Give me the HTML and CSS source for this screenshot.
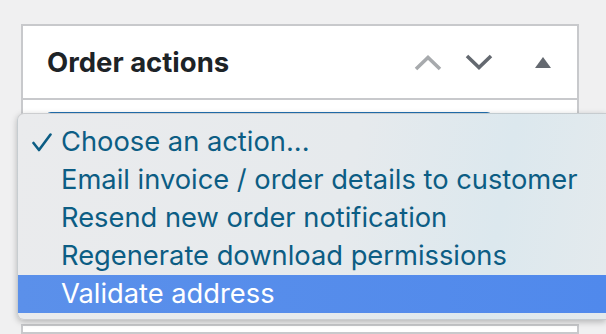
FILE: index.html
```html
<!DOCTYPE html>
<html>
<head>
<meta charset="utf-8">
<link rel="stylesheet" href="styles.css">
</head>
<body>
<div class="page">
  <div class="card">
    <div class="card-header">
      <h2 class="title">Order actions</h2>
      <div class="controls">
        <span class="ctl ctl-up"><svg width="28" height="17" viewBox="0 0 28 17"><polyline points="2,15 14,3.5 26,15" fill="none" stroke="#a7aaad" stroke-width="3.6"/></svg></span>
        <span class="ctl ctl-down"><svg width="28" height="17" viewBox="0 0 28 17"><polyline points="2,2 14,13.5 26,2" fill="none" stroke="#646970" stroke-width="3.6"/></svg></span>
        <span class="ctl ctl-toggle"><svg width="16" height="11" viewBox="0 0 16 11"><polygon points="8,0 16,11 0,11" fill="#646970"/></svg></span>
      </div>
    </div>
    <div class="card-body">
      <div class="select"></div>
    </div>
  </div>
  <div class="card card-next"></div>
</div>
<ul class="menu">
  <li class="item checked"><svg class="check" width="20" height="19" viewBox="0 0 20 19"><polyline points="1.5,10 7,17 18.5,1.5" fill="none" stroke="#0c5d84" stroke-width="2.6" stroke-linecap="round" stroke-linejoin="round"/></svg>Choose an action...</li>
  <li class="item">Email invoice / order details to customer</li>
  <li class="item">Resend new order notification</li>
  <li class="item">Regenerate download permissions</li>
  <li class="item active">Validate address</li>
</ul>
</body>
</html>
```
FILE: styles.css
```css
html, body {
  margin: 0;
  padding: 0;
  background: #f0f0f1;
  overflow: hidden;
}
.page {
  padding: 24px 0 0 21px;
  width: 558px;
}
.card {
  background: #fff;
  border: 2px solid #c8c9cc;
}
.card-header {
  height: 72px;
  display: flex;
  align-items: center;
  justify-content: space-between;
  border-bottom: 2px solid #c8c9cc;
}
.title {
  margin: 0 0 0 24px;
  font-family: Inter, "Liberation Sans", sans-serif;
  font-weight: 700;
  font-size: 27.5px;
  color: #1d2327;
}
.controls {
  display: flex;
  align-items: center;
}
.ctl {
  display: flex;
  align-items: center;
  justify-content: center;
}
.ctl svg { display: block; }
.ctl-up { margin-right: 23px; }
.ctl-down { margin-right: 42px; }
.ctl-toggle { margin-right: 26px; }
.card-body {
  height: 202px;
  padding: 12px 0 0 22px;
  box-sizing: border-box;
}
.select {
  width: 448px;
  height: 40px;
  border-top: 2px solid #2271b1;
  border-radius: 6px 6px 0 0;
}
.card-next {
  margin-top: 20px;
  height: 6px;
}
.menu {
  position: absolute;
  left: 17px;
  top: 113px;
  width: 589px;
  height: 207px;
  box-sizing: border-box;
  margin: 0;
  padding: 9px 0 0 0;
  list-style: none;
  border-radius: 7px 0 0 7px;
  border: 1px solid rgba(0,0,0,0.12);
  border-right: 0;
  background: linear-gradient(100deg, #eaebed 0%, #e6eaed 55%, #dce8ee 80%, #e4eaed 100%);
  box-shadow: 0 2px 6px rgba(0,0,0,0.25);
  font-family: Inter, "Liberation Sans", sans-serif;
  font-size: 27.3px;
  color: #0c5d84;
}
.item {
  height: 38px;
  line-height: 38px;
  padding-left: 43px;
  position: relative;
  white-space: nowrap;
}
.check {
  position: absolute;
  left: 14px;
  top: 10px;
}
.active {
  color: #fff;
  background: linear-gradient(90deg, #5b90ea 0%, #5089ec 100%);
}
```
